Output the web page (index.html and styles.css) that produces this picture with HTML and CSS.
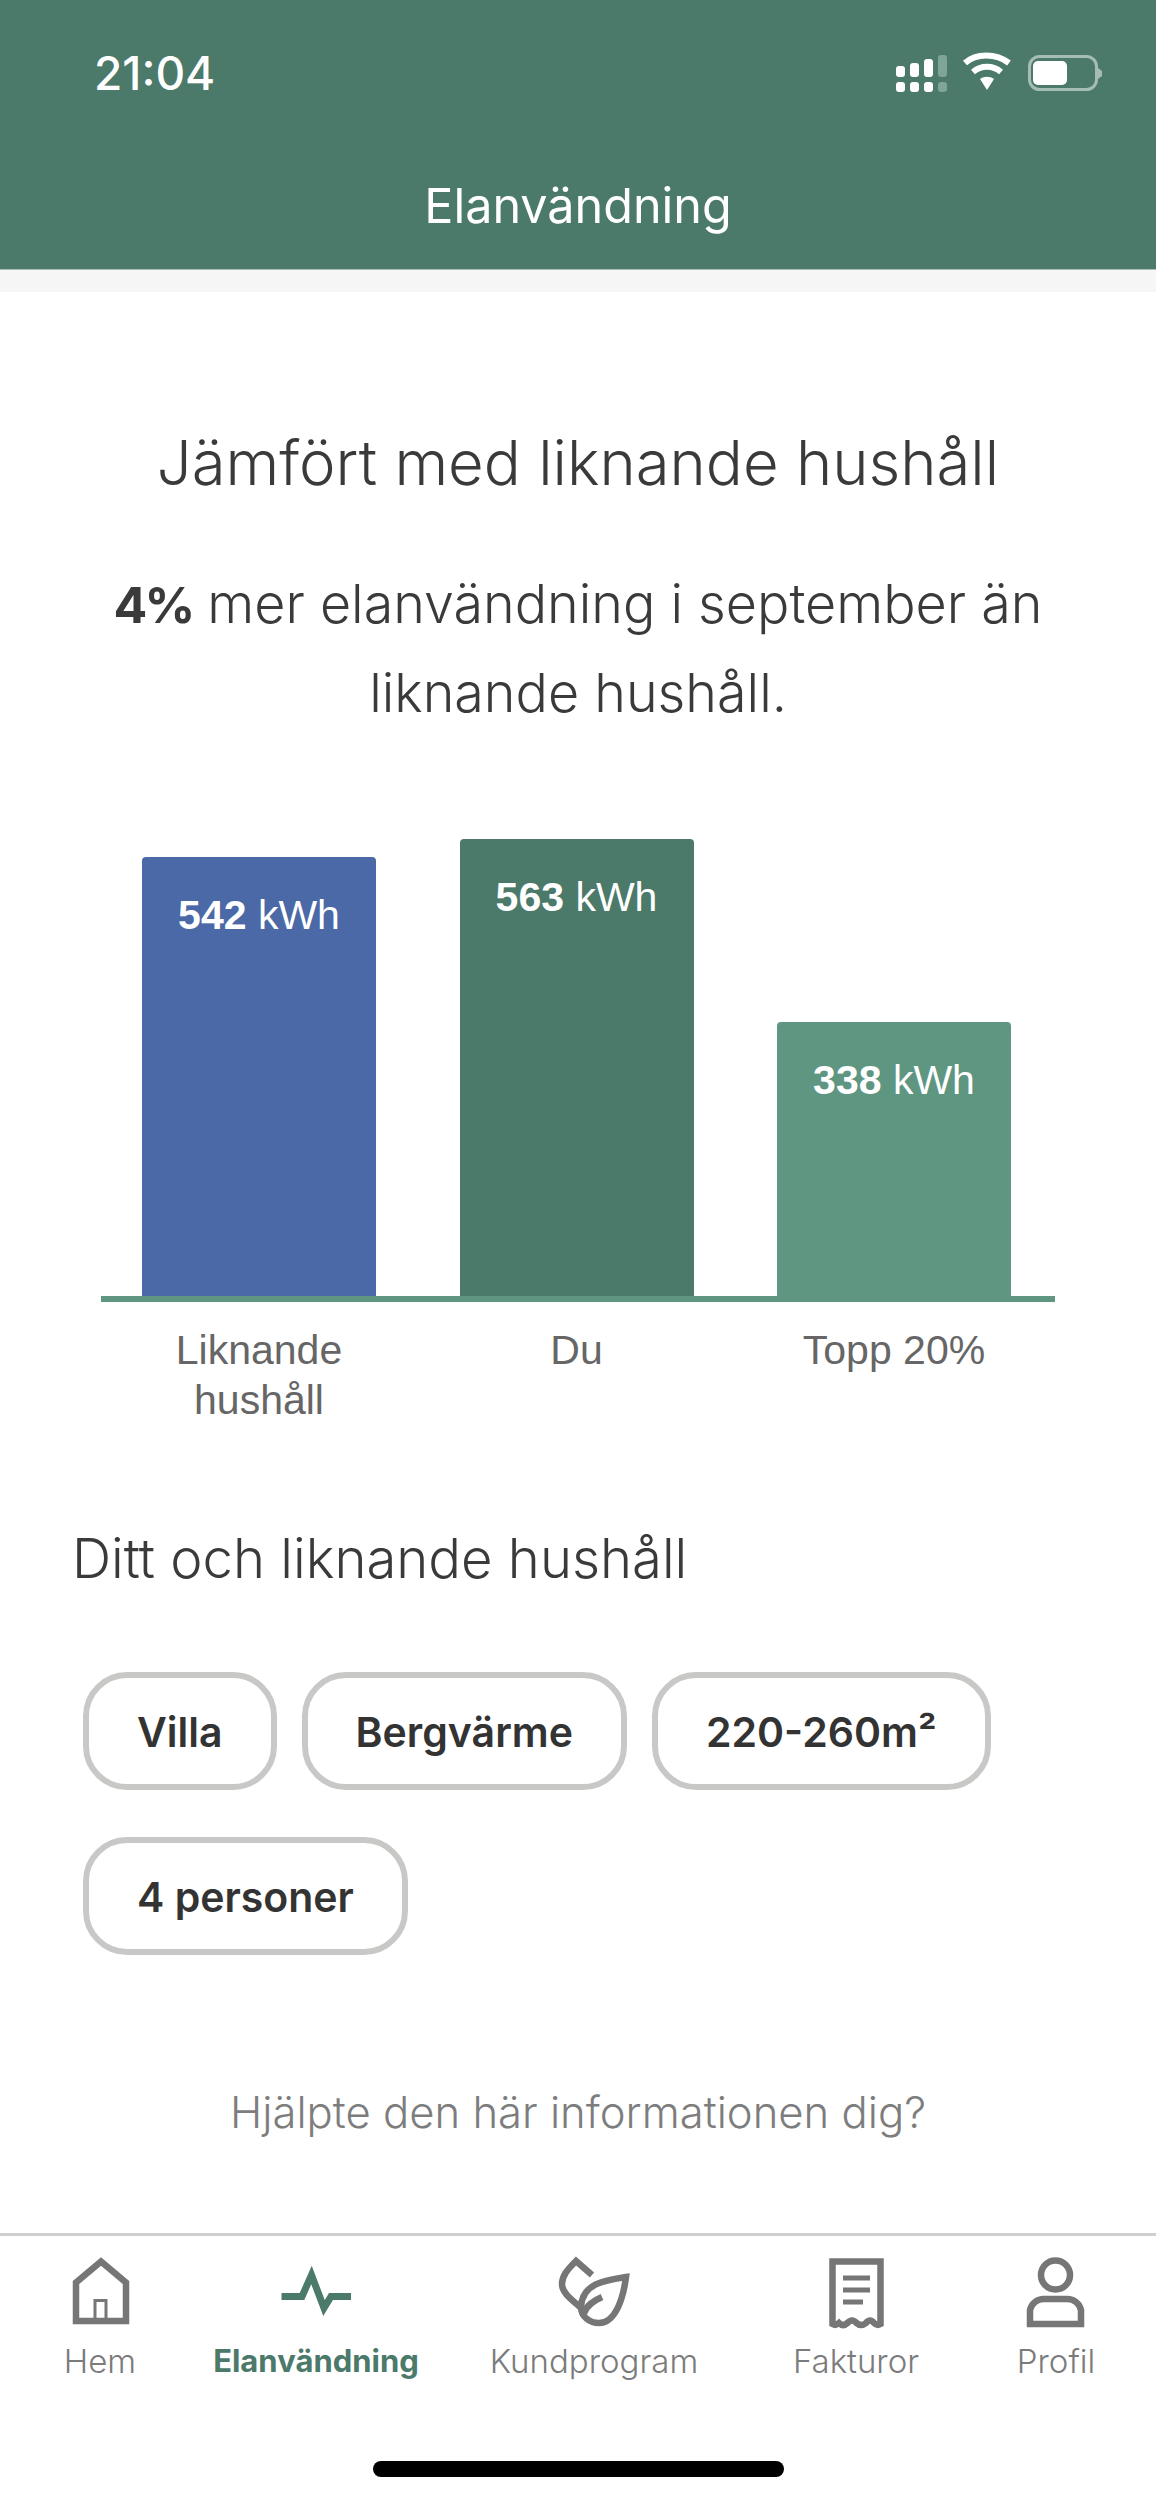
FILE: index.html
```html
<!DOCTYPE html>
<html lang="sv">
<head>
<meta charset="utf-8">
<title>Elanvändning</title>
<link rel="stylesheet" href="styles.css">
</head>
<body>
<div class="app">
  <header class="header">
    <div class="status">
      <span class="time">21:04</span>
      <svg class="status-icons" viewBox="0 0 206 46" aria-hidden="true">
        <g fill="#fff">
          <rect x="0" y="16" width="9" height="11" rx="3"/><rect x="14" y="13" width="9" height="14" rx="3"/><rect x="28" y="9" width="9" height="18" rx="3"/>
          <rect x="0" y="32" width="9" height="10" rx="3"/><rect x="14" y="32" width="9" height="10" rx="3"/><rect x="28" y="32" width="9" height="10" rx="3"/>
        </g>
        <g fill="#7fa498">
          <rect x="42" y="5" width="9" height="22" rx="3"/><rect x="42" y="32" width="9" height="10" rx="3"/>
        </g>
        <g fill="none" stroke="#fff" stroke-width="6">
          <path d="M69 13 C80 3 100 3 113 13"/>
          <path d="M77 22 C85 15 97 15 105 22"/>
        </g>
        <path d="M84 29 C88 26 94 26 98 29 L91 40 Z" fill="#fff"/>
        <rect x="133.500" y="6.500" width="67" height="33" rx="10" fill="none" stroke="#a5bdb5" stroke-width="3"/>
        <rect x="137" y="11" width="34" height="24" rx="5" fill="#fff"/>
        <path d="M202 18 L206 21 V26 L202 29 Z" fill="#a5bdb5"/>
      </svg>
    </div>
    <h2 class="title">Elanvändning</h2>
  </header>
  <div class="band"></div>
  <main class="main">
    <h1 class="heading">Jämfört med liknande hushåll</h1>
    <p class="summary"><strong>4%</strong> mer elanvändning i september än<br>liknande hushåll.</p>

    <section class="chart">
      <div class="bars">
        <div class="bar bar-blue" style="height:439px"><b>542</b> kWh</div>
        <div class="bar bar-green" style="height:457px"><b>563</b> kWh</div>
        <div class="bar bar-light" style="height:274px"><b>338</b> kWh</div>
      </div>
      <div class="bar-labels">
        <span>Liknande<br>hushåll</span>
        <span>Du</span>
        <span>Topp 20%</span>
      </div>
    </section>

    <h3 class="subheading">Ditt och liknande hushåll</h3>
    <ul class="chips">
      <li class="chip">Villa</li>
      <li class="chip">Bergvärme</li>
      <li class="chip">220-260m²</li>
      <li class="chip">4 personer</li>
    </ul>
    <p class="feedback">Hjälpte den här informationen dig?</p>
  </main>

  <nav class="nav">
    <div class="tabs">
      <a class="tab">
        <svg class="tab-icon" viewBox="0 0 80 76" aria-hidden="true">
          <path class="ink" d="M16 66 V27.500 L41 6.500 L66 27.500 V66 Z" />
          <rect class="ink-thin" x="35" y="45.500" width="11" height="20"/>
        </svg>
        <span>Hem</span>
      </a>
      <a class="tab tab-active">
        <svg class="tab-icon" viewBox="0 0 80 76" aria-hidden="true">
          <path d="M5.500 41.500 H26 L35.500 20 L48 53 L55 41.500 H75" fill="none" stroke="#4b796a" stroke-width="7" stroke-miterlimit="10"/>
        </svg>
        <span>Elanvändning</span>
      </a>
      <a class="tab">
        <svg class="tab-icon" viewBox="0 0 80 76" aria-hidden="true">
          <path class="ink" d="M38 20 L22 6 C13 15 8 21 8 29 C8 38 18 45 26 52"/>
          <path class="ink" d="M72 22 C52 25 28 28 27 52 C27 62 36 68 45 68 C61 68 69 45 72 22 Z"/>
          <path class="ink" d="M30 58 C33 50 39 46 48 42"/>
        </svg>
        <span>Kundprogram</span>
      </a>
      <a class="tab">
        <svg class="tab-icon" viewBox="0 0 80 76" aria-hidden="true">
          <path class="ink" d="M16.500 6.500 H64.500 V69 Q61 71 58 68 Q54 63 50 68 Q45 72 40.500 68 Q36 63 31.500 68 Q27 72 23 68 Q20 71 16.500 69 Z"/>
          <path class="ink-bar" d="M27 23 H54 M27 35 H54 M27 47 H47"/>
        </svg>
        <span>Fakturor</span>
      </a>
      <a class="tab">
        <svg class="tab-icon" viewBox="0 0 80 76" aria-hidden="true">
          <circle class="ink" cx="39.500" cy="20" r="14.500"/>
          <path class="ink" d="M14 69 V55 A14 14 0 0 1 28 44 H51 A14 14 0 0 1 65 55 V69 Z"/>
        </svg>
        <span>Profil</span>
      </a>
    </div>
    <div class="home-bar"></div>
  </nav>
</div>
</body>
</html>
```
FILE: styles.css
```css
* { box-sizing: border-box; }
html, body { margin: 0; padding: 0; background: #fff; }
body { font-family: Inter, "Open Sans", sans-serif; color: #3a3a3a; }

.app { width: 1156px; height: 2500px; display: flex; flex-direction: column; overflow: hidden; }

.header { height: 270px; padding-top: 48px; background: #4b796a; border-bottom: 1px solid #a9bdb6; color: #fff; }
.status { height: 50px; padding: 0 54px 0 94px; display: flex; align-items: center; justify-content: space-between; }
.time { font-family: Inter, sans-serif; font-weight: 500; font-size: 46px; line-height: 50px; }
.status-icons { width: 206px; height: 46px; display: block; }
.title { margin: 81px 0 0; text-align: center; font-weight: 400; font-size: 48.500px; line-height: 54px; }
.band { height: 22px; background: #f6f6f6; }

.main { flex: 1; padding-top: 136px; }
.heading { margin: 0; text-align: center; font-weight: 300; font-size: 61.600px; line-height: 70px; }
.summary { margin: 62px 0 0; text-align: center; font-weight: 300; font-size: 53.800px; line-height: 88px; }
.summary strong { font-weight: 700; font-size: 50px; letter-spacing: -3px; }

.chart { margin: 102px 0 0 101px; width: 954px; font-family: "Liberation Sans", Arial, sans-serif; }
.bars { height: 463px; padding-left: 41px; display: grid; grid-template-columns: repeat(3, 234px); column-gap: 83.5px; align-items: end; border-bottom: 6px solid #5f9682; }
.bar { padding-top: 36px; text-align: center; color: #fff; font-size: 41px; line-height: 44px; border-radius: 4px 4px 0 0; }
.bar-blue { background: #4b69a6; }
.bar-green { background: #4b796a; }
.bar-light { background: #5f9682; }
.bar-labels { margin-top: 23px; padding-left: 41px; display: grid; grid-template-columns: repeat(3, 234px); column-gap: 83.5px; text-align: center; color: #666; font-size: 41px; line-height: 50px; }

.subheading { margin: 103px 0 0 72px; font-weight: 300; font-size: 54.400px; line-height: 60px; }
.chips { list-style: none; margin: 84px 0 0; padding: 0 100px 0 83px; display: flex; flex-wrap: wrap; gap: 47px 25px; }
.chip { height: 118px; padding: 2px 48px 0; display: flex; align-items: center; border: 6px solid #c8c9c7; border-radius: 44px; font-weight: 600; font-size: 41px; color: #333; }
.feedback { margin: 128px 0 0; text-align: center; font-weight: 300; font-size: 43.600px; line-height: 60px; color: #7d7d7d; }

.nav { height: 267px; border-top: 3px solid #cfcfcf; display: flex; flex-direction: column; }
.tabs { padding-top: 19px; display: grid; grid-template-columns: 200px 232px 324px 200px 200px; }
.tab { display: flex; flex-direction: column; align-items: center; color: #7b7b7b; font-size: 33px; line-height: 40px; font-weight: 300; }
.tab-active { color: #4b796a; font-size: 31px; font-weight: 700; }
.tab-icon { width: 80px; height: 76px; display: block; margin-bottom: 10px; }
.ink { fill: none; stroke: #767676; stroke-width: 6.5; stroke-miterlimit: 10; }
.ink-thin { fill: none; stroke: #767676; stroke-width: 3; }
.ink-bar { fill: none; stroke: #767676; stroke-width: 5; }

.home-bar { margin: auto auto 23px; width: 411px; height: 16px; border-radius: 8px; background: #000; }
```
